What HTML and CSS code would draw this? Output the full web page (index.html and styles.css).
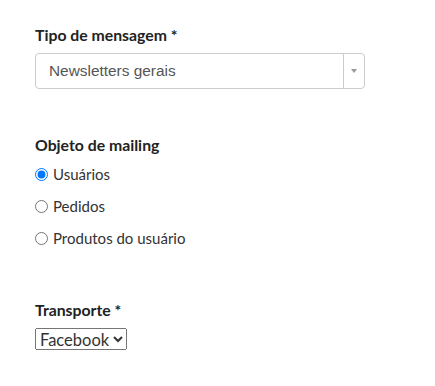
FILE: index.html
```html
<!DOCTYPE html>
<html lang="pt">
<head>
<meta charset="utf-8">
<link rel="stylesheet" href="styles.css">
</head>
<body>
<form class="form">
  <div class="field field-type">
    <label class="label">Tipo de mensagem *</label>
    <div class="chosen">
      <span class="chosen-text">Newsletters gerais</span>
      <span class="chosen-arrow"><svg width="6" height="4" viewBox="0 0 6 4"><path d="M0 0H6L3 4Z" fill="#999"/></svg></span>
    </div>
  </div>
  <div class="field field-object">
    <label class="label">Objeto de mailing</label>
    <div class="radios">
      <label class="radio"><input type="radio" name="obj" checked> Usuários</label>
      <label class="radio"><input type="radio" name="obj"> Pedidos</label>
      <label class="radio"><input type="radio" name="obj"> Produtos do usuário</label>
    </div>
  </div>
  <div class="field field-transport">
    <label class="label">Transporte *</label>
    <select class="native"><option>Facebook</option></select>
  </div>
</form>
</body>
</html>
```

FILE: styles.css
```css
html, body { margin: 0; padding: 0; background: #fff; }
body {
  font-family: Lato, "Open Sans", sans-serif;
  color: #333;
  font-size: 15px;
}
.form {
  padding: 25px 35px 0 35px;
  display: flex;
  flex-direction: column;
  width: 330px;
}
.field { display: flex; flex-direction: column; }
.field-object { margin-top: 46px; }
.field-transport { margin-top: 52px; }
.label {
  font-weight: 700;
  font-size: 15.8px;
  line-height: 20px;
  color: #222;
  margin-bottom: 8px;
}
.field-object .label { margin-bottom: 9px; }
.chosen {
  height: 36px;
  box-sizing: border-box;
  border: 1px solid #ccc;
  border-radius: 4px;
  display: flex;
  align-items: center;
}
.chosen-text {
  flex: 1;
  padding-left: 13px;
  font-family: "Liberation Sans", Arial, sans-serif;
  font-size: 15.4px;
  color: #555;
}
.chosen-arrow {
  width: 20px;
  height: 100%;
  border-left: 1px solid #ccc;
  display: flex;
  align-items: center;
  justify-content: center;
}
.radios { display: flex; flex-direction: column; gap: 12px; }
.radio {
  display: flex;
  align-items: center;
  font-size: 15px;
  line-height: 20px;
  color: #333;
}
.radio input { margin: 0 5px 0 0; width: 13px; height: 13px; }
.native {
  align-self: flex-start;
  width: 92px;
  height: 22px;
  font-family: Lato, sans-serif;
  font-size: 16.5px;
  color: #333;
}
```
